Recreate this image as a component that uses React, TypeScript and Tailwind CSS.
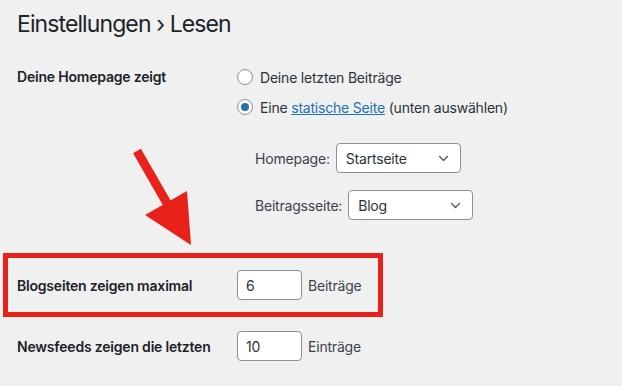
import React from "react";

const Radio = ({ checked = false }: { checked?: boolean }) => (
  <span className="w-4 h-4 rounded-full border border-[#8c8f94] bg-white flex items-center justify-center shrink-0">
    {checked && <span className="w-2 h-2 rounded-full bg-[#2271b1]" />}
  </span>
);

const Select = ({ value, width }: { value: string; width: string }) => (
  <div
    className={`${width} h-[30px] bg-white border border-[#8c8f94] rounded-[4px] flex items-center justify-between pl-[9px] pr-[10px] text-[14px] text-[#2c3338]`}
  >
    <span>{value}</span>
    <svg width="13" height="13" viewBox="0 0 20 20" fill="none">
      <path d="M4 7l6 6 6-6" stroke="#50575e" strokeWidth="2" strokeLinecap="round" strokeLinejoin="round" />
    </svg>
  </div>
);

const NumberInput = ({ value }: { value: string }) => (
  <div className="w-[65px] h-[30px] bg-white border border-[#8c8f94] rounded-[4px] flex items-center pl-[8px] text-[14px] text-[#2c3338]">
    {value}
  </div>
);

export default function App() {
  return (
    <div
      className="relative w-[622px] h-[386px] bg-[#f0f0f1] text-[#1d2327] overflow-hidden tracking-[-0.2px]"
      style={{ fontFamily: "Inter, 'Noto Sans', sans-serif" }}
    >
      <h1 className="pl-[17px] pt-[9px] text-[23px] font-normal leading-[30px] tracking-[-0.9px]">
        Einstellungen › Lesen
      </h1>

      {/* Homepage shows */}
      <div className="flex pl-[17px] mt-[29px]">
        <div className="w-[220px] text-[14px] font-semibold leading-[18px]">Deine Homepage zeigt</div>
        <div className="flex flex-col text-[14px] text-[#2c3338]">
          <label className="flex items-center gap-[7px] h-[18px]">
            <Radio />
            <span>Deine letzten Beiträge</span>
          </label>
          <label className="flex items-center gap-[7px] h-[18px] mt-[12px]">
            <Radio checked />
            <span>
              Eine <span className="text-[#2271b1] underline">statische Seite</span> (unten auswählen)
            </span>
          </label>
          <div className="flex flex-col gap-[17px] mt-[27px] pl-[18px]">
            <div className="flex items-center gap-[6px]">
              <span className="text-[#3c434a]">Homepage:</span>
              <Select value="Startseite" width="w-[125px]" />
            </div>
            <div className="flex items-center gap-[6px]">
              <span className="text-[#3c434a]">Beitragsseite:</span>
              <Select value="Blog" width="w-[125px]" />
            </div>
          </div>
        </div>
      </div>

      {/* Highlighted row */}
      <div className="ml-[3px] mt-[33px] w-[380px] h-[64px] border-[5px] border-[#e8221b] flex items-center pl-[9px]">
        <div className="w-[220px] text-[14px] font-semibold">Blogseiten zeigen maximal</div>
        <div className="flex items-center gap-[6px] text-[14px] text-[#3c434a]">
          <NumberInput value="6" />
          <span>Beiträge</span>
        </div>
      </div>

      <div className="flex items-center pl-[17px] mt-[14px]">
        <div className="w-[220px] text-[14px] font-semibold">Newsfeeds zeigen die letzten</div>
        <div className="flex items-center gap-[6px] text-[14px] text-[#3c434a]">
          <NumberInput value="10" />
          <span>Einträge</span>
        </div>
      </div>

      {/* annotation arrow */}
      <svg className="absolute left-0 top-0" width="622" height="386" viewBox="0 0 622 386">
        <line x1="137" y1="151" x2="168" y2="205" stroke="#e8221b" strokeWidth="9" />
        <polygon points="145,215 187,191 191,245" fill="#e8221b" />
      </svg>
    </div>
  );
}
